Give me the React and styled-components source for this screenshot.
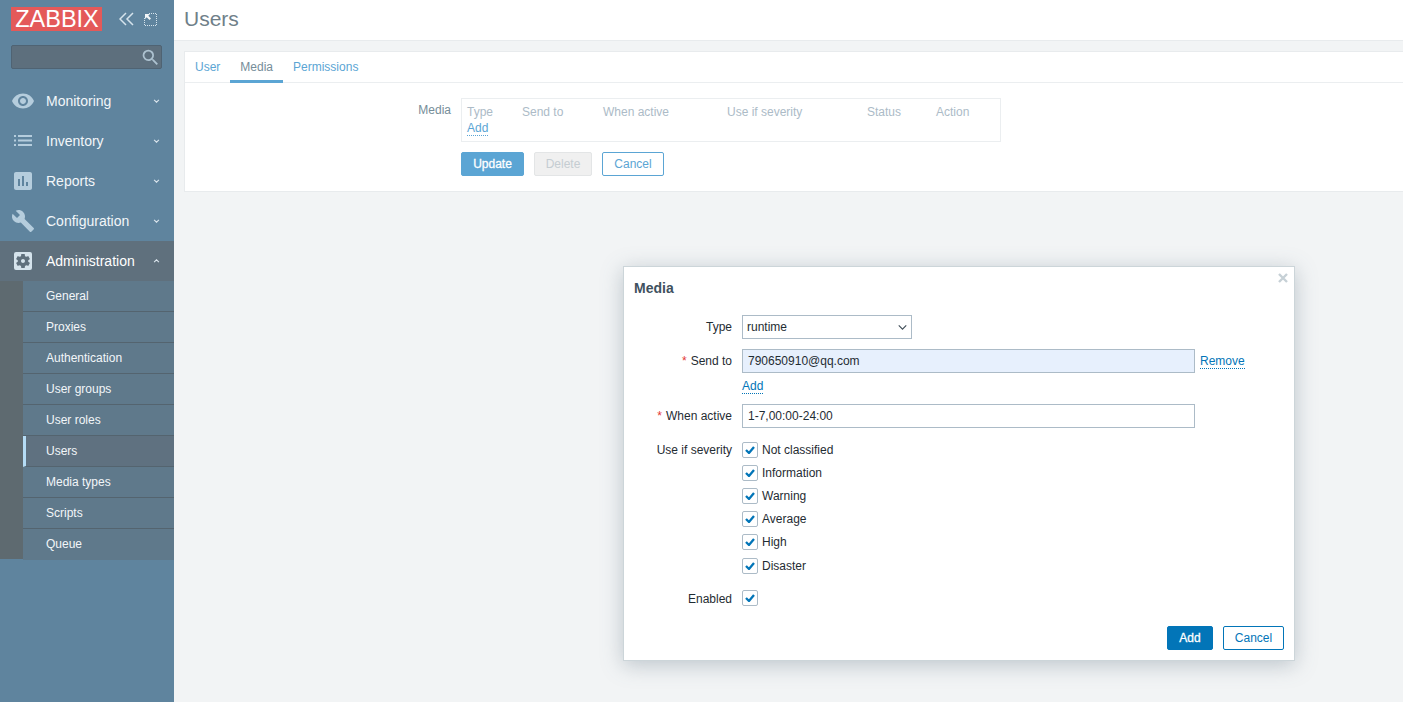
import React from "react";
import styled, { createGlobalStyle } from "styled-components";
import { MdVisibility, MdAssessment, MdBuild, MdSettingsApplications, MdSearch } from "react-icons/md";

const Global = createGlobalStyle`
  html, body { margin: 0; padding: 0; height: 100%; }
  body { font-family: "Liberation Sans", Arial, sans-serif; font-size: 12px; background: #f2f4f5; overflow: hidden; }
  * { box-sizing: border-box; }
`;

const Page = styled.div`display: flex; width: 1403px; height: 702px; overflow: hidden; position: relative;`;
const Sidebar = styled.aside`width: 174px; flex: none; background: #5f849e; display: flex; flex-direction: column;`;
const LogoRow = styled.div`height: 45px; padding: 7px 0 0 11px; display: flex; align-items: flex-start;`;
const Logo = styled.div`
  width: 91px; height: 24px; background: #e45959; color: #fff; text-align: center; padding-left: 1px;
  font-size: 23.5px; line-height: 25px;
`;
const SideTools = styled.div`display: flex; align-items: center; gap: 10px; margin: 2px 0 0 17px; height: 20px;`;
const SearchBox = styled.div`
  margin: 0 12px 0 11px; height: 24px; background: #5d6f7d; border: 1px solid #4f6373; border-radius: 2px;
  display: flex; justify-content: flex-end; align-items: center; color: #adc2d0;
`;
const Nav = styled.nav`margin-top: 12px; display: flex; flex-direction: column;`;
const NavItem = styled.div`
  height: 40px; display: flex; align-items: center; padding-left: 11px; font-size: 14px;
  color: ${p => (p.$open ? "#ffffff" : "#f2f6f9")}; background: ${p => (p.$open ? "#5f707d" : "transparent")};
`;
const NavIcon = styled.span`
  width: 24px; height: 24px; flex: none; display: flex; align-items: center; justify-content: center;
  color: ${p => (p.$light ? "#d5e3ec" : "#b5cddd")}; margin-right: 11px;
  svg { flex: none; }
`;
const NavLabel = styled.span`flex: 1;`;
const Chevron = styled.svg`width: 7px; height: 4px; margin-right: 14px; fill: none; stroke: #dbe6ee; stroke-width: 1.3;`;
const SubWrap = styled.div`background: #5e6a70; padding-left: 23px; height: 278px;`;
const SubItem = styled.div`
  height: 31px; display: flex; align-items: center; padding-left: ${p => (p.$active ? "20px" : "23px")}; color: #f2f6f9;
  background: ${p => (p.$active ? "#5f7180" : "#5f798b")}; font-size: 12px;
  border-left: ${p => (p.$active ? "3px solid #b5dcf5" : "none")};
  border-bottom: 1px solid #54646f;
  &:last-child { border-bottom: none; }
  padding-bottom: 1px;
`;

const Main = styled.main`flex: 1; display: flex; flex-direction: column; min-width: 0;`;
const Header = styled.header`height: 41px; background: #fff; border-bottom: 1px solid #e8ebed; padding: 0 0 0 10px;`;
const Title = styled.h1`margin: 0; font-size: 21px; font-weight: 400; color: #6f7f89; line-height: 37px;`;
const Panel = styled.section`
  margin: 10px 0 0 10px; height: 141px; background: #fff; border: 1px solid #e8ebed; border-right: none;
`;
const Tabs = styled.div`height: 31px; display: flex; border-bottom: 1px solid #ebeef0; align-items: stretch;`;
const Tab = styled.div`
  padding: 0 10px; line-height: 30px; color: ${p => (p.$active ? "#768d99" : "#5ba5d4")};
  border-bottom: ${p => (p.$active ? "3px solid #5ba5d4" : "none")}; height: 31px;
`;
const FormRow = styled.div`display: flex; padding-top: 15px;`;
const PanelLabel = styled.div`width: 266px; text-align: right; color: #768d99; padding-top: 5px; margin-right: 10px; line-height: 14px;`;
const PanelBody = styled.div`display: flex; flex-direction: column;`;
const MediaTable = styled.div`width: 540px; height: 44px; border: 1px solid #ebeef0; padding: 6px 0 0 5px; line-height: 14px;`;
const MediaHead = styled.div`display: grid; grid-template-columns: 55px 81px 124px 140px 69px 60px; color: #acbbc7;`;
const PanelAdd = styled.a`display: inline-block; margin-top: 2px; color: #5ba5d4; border-bottom: 1px dotted #5ba5d4; line-height: 14px; height: 15px;`;
const Buttons = styled.div`display: flex; gap: 10px; margin-top: 10px;`;
const Btn = styled.div`
  height: 24px; width: ${p => p.$w}px; border-radius: 2px; display: flex; align-items: center; justify-content: center;
  border: 1px solid ${p => p.$border}; background: ${p => p.$bg}; color: ${p => p.$color}; font-size: 12px;
  -webkit-text-stroke: ${p => (p.$strong ? "0.3px" : "0")};
`;

const Dialog = styled.div`
  position: absolute; left: 623px; top: 266px; width: 672px; height: 395px; background: #fff;
  border: 1px solid #ccd5d9; box-shadow: 0 4px 20px rgba(90, 110, 125, 0.35); padding: 0 10px;
`;
const DialogClose = styled.svg`position: absolute; top: 6px; right: 6px; width: 10px; height: 10px; stroke: #c6d0d6; stroke-width: 2.4; fill: none;`;
const DialogTitle = styled.h4`margin: 0; padding-top: 14px; height: 48px; font-size: 14px; font-weight: 700; color: #3f515e; line-height: 14px;`;
const Grid = styled.div`display: grid; grid-template-columns: 98px 1fr; column-gap: 10px; color: #1f2c33;`;
const Label = styled.div`text-align: right; height: ${p => p.$h || 24}px; line-height: 24px; margin-bottom: ${p => p.$mb ?? 10}px; white-space: nowrap;`;
const Req = styled.span`color: #e33734; margin-right: 4px;`;
const Cell = styled.div`margin-bottom: ${p => p.$mb ?? 10}px;`;
const Field = styled.div`
  height: 24px; width: ${p => p.$w || 453}px; border: 1px solid #acbbc7; padding-left: 5px; line-height: 22px; font-size: 12px;
  background: ${p => (p.$fill ? "#e7f0fd" : "#fff")}; color: #1f2c33;
`;
const SelectField = styled(Field)`display: flex; justify-content: space-between; align-items: center; padding: 0 4px;`;
const SelectArrow = styled.svg`width: 9px; height: 5px; fill: none; stroke: #3f4d57; stroke-width: 1.3;`;
const FieldLine = styled.div`display: flex; align-items: center; gap: 5px;`;
const Link = styled.a`color: #0275b8; border-bottom: 1px dotted #0275b8; line-height: 14px; height: 15px; display: inline-block;`;
const AddLink = styled(Link)`margin-top: 6px;`;
const SevItem = styled.div`
  display: flex; align-items: center; gap: 4px; height: 23px; &:last-child { margin-top: 1px; }
`;
const EnabledItem = styled.div`display: flex; align-items: center; height: 24px; margin-top: -1px;`;
const CheckBox = styled.span`
  width: 16px; height: 16px; border: 1px solid #acbbc7; border-radius: 2px; display: inline-flex; align-items: center; justify-content: center; background: #fff;
`;
const CheckMark = styled.svg`width: 10px; height: 8px; fill: none; stroke: #0275b8; stroke-width: 2.3;`;
const DialogFooter = styled.div`position: absolute; right: 10px; bottom: 10px; display: flex; gap: 10px;`;

const Check = () => (
  <CheckBox>
    <CheckMark viewBox="0 0 10 8"><path d="M1 4l3 3 5-6" /></CheckMark>
  </CheckBox>
);
const Down = () => <Chevron viewBox="0 0 8 5"><path d="M1 1l3 3 3-3" /></Chevron>;
const Up = () => <Chevron viewBox="0 0 8 5"><path d="M1 4l3-3 3 3" /></Chevron>;
const ListIcon = () => (
  <svg width="18" height="12" viewBox="0 0 18 12" fill="currentColor">
    <rect x="0" y="0" width="2" height="2" /><rect x="4" y="0" width="14" height="2" />
    <rect x="0" y="4.5" width="2" height="2" /><rect x="4" y="4.5" width="14" height="2" />
    <rect x="0" y="9" width="2" height="2" /><rect x="4" y="9" width="14" height="2" />
  </svg>
);

const menu = [
  ["Monitoring", <MdVisibility size={24} />],
  ["Inventory", <ListIcon />],
  ["Reports", <MdAssessment size={24} />],
  ["Configuration", <MdBuild size={24} />],
];
const subs = ["General", "Proxies", "Authentication", "User groups", "User roles", "Users", "Media types", "Scripts", "Queue"];
const sev = ["Not classified", "Information", "Warning", "Average", "High", "Disaster"];

export default function App() {
  return (
    <>
      <Global />
      <Page>
        <Sidebar>
          <LogoRow>
            <Logo>ZABBIX</Logo>
            <SideTools>
              <svg width="15" height="14" viewBox="0 0 15 14" fill="none" stroke="#d5e3ec" strokeWidth="1.5">
                <path d="M7 1L1 7l6 6M14 1L8 7l6 6" />
              </svg>
              <svg width="13" height="13" viewBox="0 0 13 13" fill="none">
                <path d="M5 .5h7.5V12.5H.5V5" stroke="#d5e3ec" strokeDasharray="1 1" />
                <path d="M1 1h5L4.3 2.7 7 5.5 5.5 7 2.7 4.3 1 6z" fill="#f2f6f9" />
              </svg>
            </SideTools>
          </LogoRow>
          <SearchBox><MdSearch size={21} /></SearchBox>
          <Nav>
            {menu.map(([name, icon]) => (
              <NavItem key={name}>
                <NavIcon>{icon}</NavIcon>
                <NavLabel>{name}</NavLabel>
                <Down />
              </NavItem>
            ))}
            <NavItem $open>
              <NavIcon $light><MdSettingsApplications size={24} /></NavIcon>
              <NavLabel>Administration</NavLabel>
              <Up />
            </NavItem>
            <SubWrap>
              {subs.map(s => <SubItem key={s} $active={s === "Users"}>{s}</SubItem>)}
            </SubWrap>
          </Nav>
        </Sidebar>
        <Main>
          <Header><Title>Users</Title></Header>
          <Panel>
            <Tabs>
              <Tab>User</Tab>
              <Tab $active>Media</Tab>
              <Tab>Permissions</Tab>
            </Tabs>
            <FormRow>
              <PanelLabel>Media</PanelLabel>
              <PanelBody>
                <MediaTable>
                  <MediaHead>
                    <span>Type</span><span>Send to</span><span>When active</span><span>Use if severity</span><span>Status</span><span>Action</span>
                  </MediaHead>
                  <PanelAdd>Add</PanelAdd>
                </MediaTable>
                <Buttons>
                  <Btn $w={63} $bg="#5ba5d4" $border="#5ba5d4" $color="#fff" $strong>Update</Btn>
                  <Btn $w={58} $bg="#f0f0f0" $border="#e3e5e6" $color="#c5cdd2">Delete</Btn>
                  <Btn $w={62} $bg="#fff" $border="#5ba5d4" $color="#5ba5d4">Cancel</Btn>
                </Buttons>
              </PanelBody>
            </FormRow>
          </Panel>
        </Main>
        <Dialog>
          <DialogClose viewBox="0 0 10 10"><path d="M1 1l8 8M9 1l-8 8" /></DialogClose>
          <DialogTitle>Media</DialogTitle>
          <Grid>
            <Label>Type</Label>
            <Cell>
              <SelectField $w={170}>runtime<SelectArrow viewBox="0 0 10 6"><path d="M.5.5L5 5 9.5.5" /></SelectArrow></SelectField>
            </Cell>
            <Label $h={45}><Req>*</Req>Send to</Label>
            <Cell>
              <FieldLine><Field $fill>790650910@qq.com</Field><Link>Remove</Link></FieldLine>
              <AddLink>Add</AddLink>
            </Cell>
            <Label><Req>*</Req>When active</Label>
            <Cell><Field>1-7,00:00-24:00</Field></Cell>
            <Label $mb={0}>Use if severity</Label>
            <Cell>
              {sev.map(s => <SevItem key={s}><Check />{s}</SevItem>)}
            </Cell>
            <Label>Enabled</Label>
            <EnabledItem><Check /></EnabledItem>
          </Grid>
          <DialogFooter>
            <Btn $w={46} $bg="#0275b8" $border="#0275b8" $color="#fff" $strong>Add</Btn>
            <Btn $w={61} $bg="#fff" $border="#0275b8" $color="#0275b8">Cancel</Btn>
          </DialogFooter>
        </Dialog>
      </Page>
    </>
  );
}
